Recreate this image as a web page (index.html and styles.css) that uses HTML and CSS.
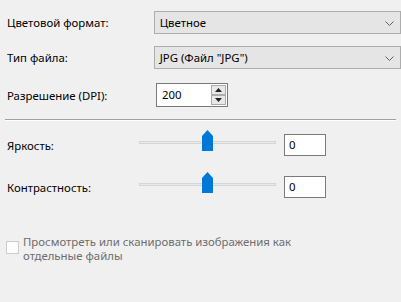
FILE: index.html
```html
<!DOCTYPE html>
<html lang="ru">
<head>
<meta charset="utf-8">
<link rel="stylesheet" href="styles.css">
</head>
<body>
<div class="panel">
  <div class="row r1">
    <span class="label">Цветовой формат:</span>
    <div class="combo"><span>Цветное</span>
      <svg class="chev" width="9" height="5" viewBox="0 0 9 5"><path d="M0.5 0.5 L4.5 4.5 L8.5 0.5" fill="none" stroke="#606060" stroke-width="1"/></svg>
    </div>
  </div>
  <div class="row r2">
    <span class="label">Тип файла:</span>
    <div class="combo"><span>JPG (Файл "JPG")</span>
      <svg class="chev" width="9" height="5" viewBox="0 0 9 5"><path d="M0.5 0.5 L4.5 4.5 L8.5 0.5" fill="none" stroke="#606060" stroke-width="1"/></svg>
    </div>
  </div>
  <div class="row r3">
    <span class="label">Разрешение (DPI):</span>
    <div class="spin">
      <span class="spin-val">200</span>
      <div class="spin-btns">
        <div class="sbtn"><svg width="7" height="4" viewBox="0 0 7 4"><path d="M0 4 L3.5 0 L7 4 Z" fill="#202020"/></svg></div>
        <div class="sbtn"><svg width="7" height="4" viewBox="0 0 7 4"><path d="M0 0 L3.5 4 L7 0 Z" fill="#202020"/></svg></div>
      </div>
    </div>
  </div>
  <div class="sep"></div>
  <div class="srow s1">
    <span class="slabel">Яркость:</span>
    <div class="slider"><div class="track"></div><div class="thumb"></div></div>
    <div class="edit">0</div>
  </div>
  <div class="srow s2">
    <span class="slabel">Контрастность:</span>
    <div class="slider"><div class="track"></div><div class="thumb"></div></div>
    <div class="edit">0</div>
  </div>
  <div class="check">
    <div class="box"></div>
    <span class="ctext">Просмотреть или сканировать изображения как<br>отдельные файлы</span>
  </div>
</div>
</body>
</html>
```
FILE: styles.css
```css
html, body {
  margin: 0;
  padding: 0;
  background: #f0f0f0;
}
body {
  width: 401px;
  height: 302px;
  overflow: hidden;
  font-family: "Noto Sans", "Open Sans", sans-serif;
  font-size: 11.4px;
  color: #000;
}
.panel {
  display: flex;
  flex-direction: column;
  padding-top: 11px;
}
.row {
  display: flex;
  align-items: center;
}
.label {
  width: 149px;
  padding-left: 7px;
}
.combo {
  width: 238px;
  height: 21px;
  border: 1px solid #adadad;
  background: #e5e5e5;
  display: flex;
  align-items: center;
  justify-content: space-between;
  padding: 0 6px 0 5px;
}
.chev {
  margin-top: 1px;
}
.r2 {
  margin-top: 12px;
}
.r3 {
  margin-top: 14px;
}
.spin {
  width: 70px;
  height: 22px;
  border: 1px solid #7a7a7a;
  background: #fff;
  display: flex;
  justify-content: space-between;
}
.spin-val {
  padding-left: 5px;
  line-height: 22px;
}
.spin-btns {
  display: flex;
  flex-direction: column;
  justify-content: space-between;
  padding: 1px 1px 1px 0;
}
.sbtn {
  width: 13px;
  height: 9px;
  border: 1px solid #acacac;
  background: #e8e8e8;
  display: flex;
  align-items: center;
  justify-content: center;
}
.sep {
  margin: 12px 5px 0 5px;
  height: 1px;
  background: #a0a0a0;
  box-shadow: 0 1px 0 #fff;
}
.srow {
  display: flex;
  align-items: flex-start;
  height: 27px;
}
.s1 {
  margin-top: 10px;
}
.s2 {
  margin-top: 15px;
}
.slabel {
  width: 132px;
  padding-left: 7px;
  margin-top: 8px;
}
.slider {
  position: relative;
  width: 137px;
  height: 21px;
  display: flex;
  align-items: center;
}
.track {
  width: 137px;
  height: 3px;
  margin-top: 4px;
  background: #e7eaea;
  border: 1px solid #d6d6d6;
  box-sizing: border-box;
}
.thumb {
  position: absolute;
  left: 63px;
  top: 0;
  width: 11px;
  height: 21px;
  background: #0078d7;
  clip-path: polygon(50% 0, 100% 28%, 100% 100%, 0 100%, 0 28%);
}
.edit {
  margin-left: 8px;
  margin-top: 4px;
  width: 36px;
  height: 20px;
  border: 1px solid #7a7a7a;
  background: #fff;
  padding-left: 4px;
  line-height: 20px;
}
.check {
  display: flex;
  align-items: flex-start;
  margin-top: 36px;
}
.box {
  width: 11px;
  height: 11px;
  border: 1px solid #cccccc;
  background: #fdfdfd;
  margin: 6px 4px 0 6px;
  flex: none;
}
.ctext {
  color: #6d6d6d;
  line-height: 14px;
}
```
